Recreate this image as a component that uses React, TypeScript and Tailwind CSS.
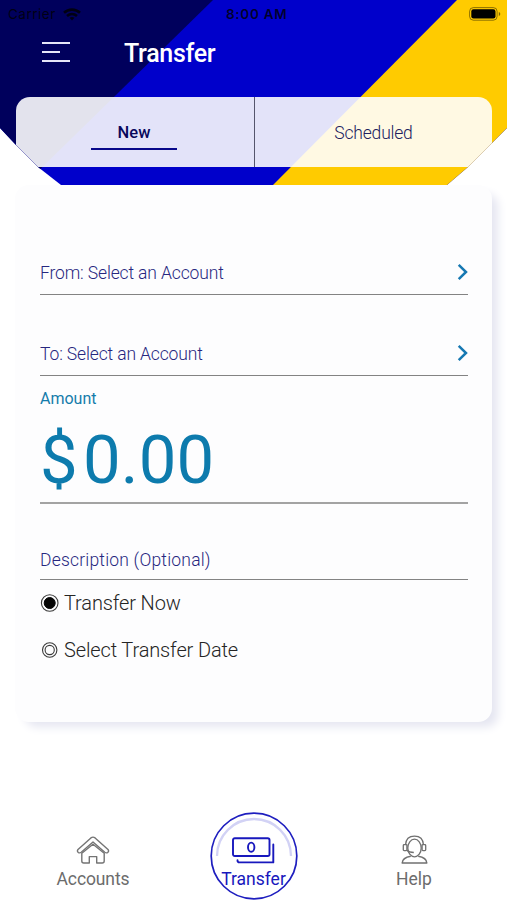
function StatusBar() {
  return (
    <div className="relative flex h-7 items-center justify-between pl-2 pr-[6px] text-[13.5px] text-black/80">
      <div className="flex items-center gap-[7px]">
        <span className="tracking-[0.5px] font-['Inter',sans-serif]">Carrier</span>
        <svg width="18" height="13" viewBox="0 0 18 13" fill="none" stroke="currentColor" strokeWidth="2.6">
          <path d="M1 4.800C5.500 0.600 12.500 0.600 17 4.800" />
          <path d="M4 8C7 5.400 11 5.400 14 8" />
          <path d="M6.500 9.800Q9 8 11.500 9.800L9 12.500Z" fill="currentColor" stroke="none" />
        </svg>
      </div>
      <span className="absolute left-[226px] font-semibold tracking-[0.7px] font-['Inter',sans-serif]">8:00 AM</span>
      <svg width="32" height="14" viewBox="0 0 32 14" className="-mt-px text-black">
        <rect x="0.600" y="0.600" width="27.500" height="12.600" rx="3.800" fill="none" stroke="currentColor" strokeOpacity="0.450" />
        <rect x="2.300" y="2.300" width="24.200" height="9.200" rx="2.200" fill="currentColor" />
        <path d="M29.800 5v4q1.500-.6 1.500-2t-1.500-2" fill="currentColor" fillOpacity="0.500" />
      </svg>
    </div>
  );
}

function Header() {
  return (
    <header className="relative h-[185px] bg-[#0000cb] [clip-path:polygon(0_0,100%_0,100%_128px,492px_143px,468px_167px,447px_185px,61px_185px,38px_167px,15px_144px,0_128px)]">
      <div className="absolute inset-0 bg-[#00005c] [clip-path:polygon(0_0,213px_0,24px_185px,0_185px)]" />
      <div className="absolute inset-0 bg-[#ffcb00] [clip-path:polygon(457px_0,100%_0,100%_100%,273px_100%)]" />
      <StatusBar />
      <div className="relative flex h-[69px] items-start pl-[42px] pt-[13px]">
        <button aria-label="Menu" className="flex w-7 flex-col gap-[7px] pt-px">
          <span className="h-[2px] w-7 bg-[#e6e6f8]" />
          <span className="h-[2px] w-[18px] bg-[#e6e6f8]" />
          <span className="h-[2px] w-7 bg-[#e6e6f8]" />
        </button>
        <h1 className="ml-[54px] -mt-px text-[25px] leading-7 font-medium tracking-[-0.3px] text-white">Transfer</h1>
      </div>
      <div className="relative ml-4 flex h-[70px] w-[476px] overflow-hidden rounded-t-[14px] bg-white/89">
        <button className="flex w-[239px] flex-col items-center border-r border-[#55556d] pr-[2px] pt-[25px]">
          <span className="text-[16.500px] leading-[22px] font-medium tracking-[0.15px] text-[#08085c]">New</span>
          <span className="mt-1 h-[2px] w-[86px] bg-[#08088a]" />
        </button>
        <button className="flex flex-1 flex-col items-center pt-[25px]">
          <span className="text-[17.500px] leading-[22px] font-light tracking-[-0.2px] text-[#20205f]">Scheduled</span>
        </button>
      </div>
    </header>
  );
}

function AccountRow({ label }: { label: string }) {
  return (
    <button className="flex h-[81px] w-full items-end justify-between border-b border-[#838383] pb-[9px] text-left">
      <span className="text-[17.500px] leading-6 font-light tracking-[-0.14px] text-[#27277f]">{label}</span>
      <svg width="11" height="18" viewBox="0 0 11 18" fill="none" className="mb-[4px]">
        <path d="M1.700 1.800L9 9L1.700 16.200" stroke="#1678b2" strokeWidth="2.500" />
      </svg>
    </button>
  );
}

function Radio({ checked }: { checked?: boolean }) {
  return (
    <svg width="20" height="20" viewBox="0 0 20 20" fill="none" stroke="#3b3b3b">
      {checked ? (
        <>
          <circle cx="9.700" cy="10" r="8.300" strokeWidth="1.100" />
          <circle cx="9.700" cy="10" r="5.500" fill="#050505" stroke="#050505" />
        </>
      ) : (
        <>
          <circle cx="9.700" cy="10" r="7.200" strokeWidth="1.100" />
          <circle cx="9.700" cy="10" r="4.600" strokeWidth="1.100" />
        </>
      )}
    </svg>
  );
}

function TransferForm() {
  return (
    <main className="ml-[15px] h-[537px] w-[477px] rounded-[14px] bg-[#fdfdfe] pl-[25px] pr-6 pt-[29px] shadow-[8px_7px_10px_-2px_#e5e6f1]">
      <AccountRow label="From: Select an Account" />
      <AccountRow label="To: Select an Account" />
      <div className="h-[128px] border-b-2 border-[#a3a3a3] pt-[11px]">
        <div className="text-[16px] leading-6 text-[#147cab]">Amount</div>
        <div className="mt-[10px] flex text-[67px] leading-[78px] text-[#0d7bad]">
          <span className="w-[43px]">$</span>
          <span className="tracking-[0.2px]">0.00</span>
        </div>
      </div>
      <div className="flex h-[76px] items-end border-b border-[#838383] pb-[7px]">
        <span className="text-[17.500px] leading-6 font-light tracking-[0.2px] text-[#27277f]">Description (Optional)</span>
      </div>
      <div className="mt-[10px] flex flex-col gap-[21px] text-[20px] leading-[26px] font-light tracking-[-0.13px] text-[#252525]">
        <label className="flex items-center gap-1">
          <Radio checked />
          <span>Transfer Now</span>
        </label>
        <label className="flex items-center gap-1">
          <Radio />
          <span>Select Transfer Date</span>
        </label>
      </div>
    </main>
  );
}

function HouseIcon() {
  return (
    <svg width="34" height="28" viewBox="0 0 34 28" fill="none" stroke="#747474" strokeWidth="1.400" strokeLinejoin="round">
      <path d="M2 13.500L14.900 1.900Q17 .3 19.100 1.900L32 13.500Q33.400 15.400 31.500 16.600Q30.200 17.300 28.800 16.200L17 6L5.200 16.200Q3.800 17.300 2.500 16.600Q.6 15.400 2 13.500Z" />
      <path d="M5.800 17.300V25Q5.800 27 7.800 27H13.300V20.600H20.700V27H26.200Q28.200 27 28.200 25V17.300L17 8.200Z" />
    </svg>
  );
}

function CashIcon() {
  return (
    <svg width="43" height="27" viewBox="0 0 43 27" fill="none" stroke="#1818bd" strokeWidth="1.900" strokeLinejoin="round" strokeLinecap="round">
      <rect x="1" y="1.200" width="36.500" height="17.800" rx="1.800" />
      <ellipse cx="19.200" cy="10.200" rx="3.200" ry="4.600" />
      <path d="M41.300 7.500V25.400H7.500Q5.500 25.400 5.500 23.200" />
    </svg>
  );
}

function AgentIcon() {
  return (
    <svg width="27" height="30" viewBox="0 0 27 30" fill="none" stroke="#707070" strokeWidth="1.300" strokeLinejoin="round">
      <path d="M4.500 10Q5 1.200 13.500 1.200T22.500 10" />
      <ellipse cx="13.500" cy="13" rx="6.700" ry="8.800" />
      <rect x="2.300" y="9.600" width="3.600" height="6" rx="0.800" />
      <rect x="21.100" y="9.600" width="3.600" height="6" rx="0.800" />
      <path d="M6 15.300Q8 17.500 12.800 17.500" strokeWidth="1.600" />
      <path d="M9.800 21.300Q1.500 22.700 1.200 28H25.800Q25.500 22.700 17.200 21.300" strokeWidth="1.500" />
    </svg>
  );
}

function TabBar() {
  return (
    <nav className="mt-[90px] flex h-[88px] items-start justify-center text-[17.500px] leading-[22px] text-[#6c6c6c]">
      <button className="flex w-[160px] flex-col items-center pt-[24px]">
        <HouseIcon />
        <span className="mt-1 tracking-[-0.1px]">Accounts</span>
      </button>
      <button className="relative flex w-[161px] flex-col items-center pt-[25px] text-[#1818bd]">
        <svg width="88" height="88" viewBox="0 0 88 88" fill="none" className="absolute top-0 left-[37px]">
          <circle cx="44" cy="44" r="42.800" stroke="#1e1ebf" strokeWidth="1.700" />
          <path d="M7 44a37 37 0 0 1 74 0" stroke="#d2d2f5" strokeWidth="2.300" />
        </svg>
        <CashIcon />
        <span className="relative mt-1">Transfer</span>
      </button>
      <button className="flex w-[160px] flex-col items-center pt-[23px]">
        <AgentIcon />
        <span className="mt-[3px]">Help</span>
      </button>
    </nav>
  );
}

export default function App() {
  return (
    <div className="h-[900px] w-[507px] overflow-hidden bg-white font-['Roboto',sans-serif]">
      <Header />
      <TransferForm />
      <TabBar />
    </div>
  );
}
